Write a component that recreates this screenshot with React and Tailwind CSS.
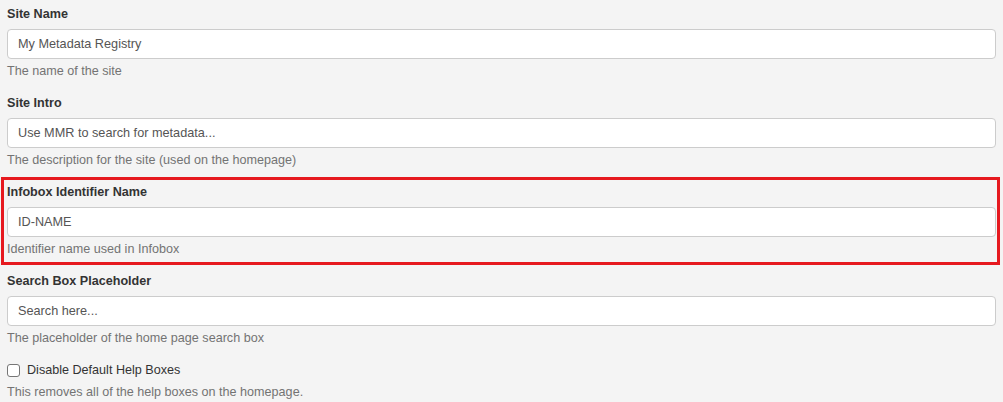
const fields = [
  { label: "Site Name", value: "My Metadata Registry", help: "The name of the site" },
  { label: "Site Intro", value: "Use MMR to search for metadata...", help: "The description for the site (used on the homepage)" },
  { label: "Infobox Identifier Name", value: "ID-NAME", help: "Identifier name used in Infobox", marked: true },
  { label: "Search Box Placeholder", value: "Search here...", help: "The placeholder of the home page search box" },
];

const FormGroup = ({ label, value, help, marked }) => (
  <div className="relative mb-[14px]">
    {marked && (
      <div className="pointer-events-none absolute -top-[6px] -bottom-[7px] -left-[6px] -right-[4px] border-[3px] border-[#e6191f]" />
    )}
    <label className="mb-[6px] block h-[18px] font-bold text-[#333]">{label}</label>
    <input
      type="text"
      defaultValue={value}
      className="block h-[30px] w-full rounded-[4px] border border-[#cccccc] bg-white px-[10px] text-[12.7px] text-[#555] outline-none"
      style={{ fontFamily: "inherit" }}
    />
    <p className="mt-[3px] h-[18px] text-[#737373]">{help}</p>
  </div>
);

export default function App() {
  return (
    <div
      className="min-h-[402px] w-full bg-[#f4f4f4] px-[7px] pt-[5px] text-[12.6px] leading-[18px]"
      style={{ fontFamily: '"Liberation Sans", Arial, sans-serif' }}
    >
      {fields.map((f) => (
        <FormGroup key={f.label} {...f} />
      ))}
      <label className="flex h-[18px] items-center text-[#333]">
        <span className="mr-[7px] inline-block h-[13px] w-[13px] rounded-[3px] border border-[#767676] bg-white" />
        Disable Default Help Boxes
      </label>
      <p className="mt-[4px] text-[#737373]">This removes all of the help boxes on the homepage.</p>
    </div>
  );
}
